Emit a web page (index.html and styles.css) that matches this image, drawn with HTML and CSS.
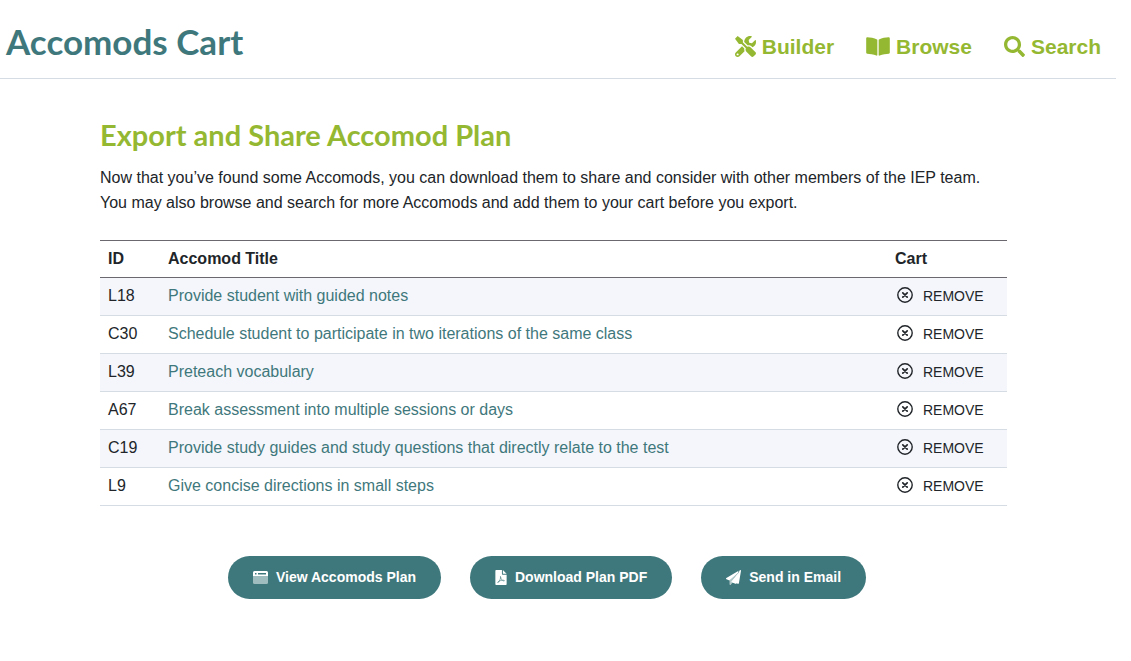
FILE: index.html
```
<!DOCTYPE html>
<html lang="en">
<head>
<meta charset="UTF-8">
<meta name="viewport" content="width=device-width, initial-scale=1.0">
<title>Accomods Cart</title>
<link rel="stylesheet" href="styles.css">
</head>
<body>

<!-- icons shared by the table rows -->
<svg class="sprite" aria-hidden="true">
  <symbol id="icon-remove" viewBox="0 0 16 16">
    <circle cx="8" cy="8" r="7.2" fill="none" stroke="currentColor" stroke-width="1.400"/>
    <path d="M5.800 5.800l4.400 4.400M10.200 5.800l-4.400 4.400" fill="none" stroke="currentColor" stroke-width="1.700" stroke-linecap="round"/>
  </symbol>
</svg>

<header class="site-header">
  <h1>Accomods Cart</h1>
  <nav class="main-nav">
    <a href="#builder">
      <svg class="nav-icon" viewBox="0 0 512 512"><path d="M501.1 395.7L384 278.6c-23.1-23.1-57.6-27.6-85.4-13.9L192 158.1V96L64 0 0 64l96 128h62.1l106.6 106.6c-13.6 27.8-9.2 62.3 13.9 85.4l117.1 117.1c14.6 14.6 38.2 14.6 52.7 0l52.7-52.7c14.5-14.6 14.5-38.2 0-52.7zM331.7 225c28.3 0 54.9 11 74.9 31l19.4 19.4c15.8-6.9 30.8-16.5 43.8-29.5 37.1-37.1 49.7-89.3 37.9-136.7-2.2-9-13.5-12.1-20.1-5.5l-74.4 74.4-67.9-11.3L334 98.9l74.4-74.4c6.6-6.6 3.4-17.9-5.7-20.2-47.4-11.7-99.6.9-136.6 37.9-28.5 28.5-41.9 66.1-41.2 103.6l82.1 82.1c8.1-1.9 16.5-2.9 24.7-2.9zm-103.9 82l-56.7-56.7L18.7 402.8c-25 25-25 65.5 0 90.5s65.5 25 90.5 0l123.6-123.6c-7.6-19.9-9.9-41.6-5-62.7zM64 472c-13.2 0-24-10.8-24-24 0-13.3 10.7-24 24-24s24 10.7 24 24c0 13.2-10.7 24-24 24z"/></svg>
      Builder
    </a>
    <a href="#browse">
      <svg class="nav-icon wide" viewBox="0 0 576 512"><path d="M542.22 32.05c-54.8 3.11-163.72 14.43-230.96 55.59-4.64 2.84-7.27 7.89-7.27 13.17v363.87c0 11.55 12.63 18.85 23.28 13.49 69.18-34.82 169.23-44.32 218.7-46.92 16.89-.89 30.02-14.43 30.02-30.66V62.75c.01-17.71-15.35-31.74-33.77-30.7zM264.73 87.64C197.5 46.48 88.58 35.17 33.78 32.05 15.36 31.01 0 45.04 0 62.75V400.6c0 16.24 13.13 29.78 30.02 30.66 49.49 2.6 149.59 12.11 218.77 46.95 10.62 5.35 23.21-1.94 23.21-13.46V100.63c0-5.29-2.62-10.14-7.27-12.99z"/></svg>
      Browse
    </a>
    <a href="#search">
      <svg class="nav-icon" viewBox="0 0 512 512"><path d="M505 442.7L405.3 343c-4.5-4.5-10.6-7-17-7H372c27.6-35.3 44-79.7 44-128C416 93.1 322.9 0 208 0S0 93.1 0 208s93.1 208 208 208c48.3 0 92.7-16.4 128-44v16.3c0 6.4 2.5 12.5 7 17l99.7 99.7c9.4 9.4 24.6 9.4 33.9 0l28.3-28.3c9.4-9.4 9.4-24.6.1-34zM208 336c-70.7 0-128-57.2-128-128 0-70.7 57.2-128 128-128 70.7 0 128 57.2 128 128 0 70.7-57.2 128-128 128z"/></svg>
      Search
    </a>
  </nav>
</header>

<main class="content">
  <h2>Export and Share Accomod Plan</h2>
  <p class="intro">Now that you’ve found some Accomods, you can download them to share and consider with other members of the IEP team. You may also browse and search for more Accomods and add them to your cart before you export.</p>

  <table class="cart-table">
    <thead>
      <tr>
        <th class="col-id" scope="col">ID</th>
        <th scope="col">Accomod Title</th>
        <th class="col-cart" scope="col">Cart</th>
      </tr>
    </thead>
    <tbody>
      <tr>
        <td>L18</td>
        <td><a href="#L18">Provide student with guided notes</a></td>
        <td><button class="remove"><svg><use href="#icon-remove"/></svg>REMOVE</button></td>
      </tr>
      <tr>
        <td>C30</td>
        <td><a href="#C30">Schedule student to participate in two iterations of the same class</a></td>
        <td><button class="remove"><svg><use href="#icon-remove"/></svg>REMOVE</button></td>
      </tr>
      <tr>
        <td>L39</td>
        <td><a href="#L39">Preteach vocabulary</a></td>
        <td><button class="remove"><svg><use href="#icon-remove"/></svg>REMOVE</button></td>
      </tr>
      <tr>
        <td>A67</td>
        <td><a href="#A67">Break assessment into multiple sessions or days</a></td>
        <td><button class="remove"><svg><use href="#icon-remove"/></svg>REMOVE</button></td>
      </tr>
      <tr>
        <td>C19</td>
        <td><a href="#C19">Provide study guides and study questions that directly relate to the test</a></td>
        <td><button class="remove"><svg><use href="#icon-remove"/></svg>REMOVE</button></td>
      </tr>
      <tr>
        <td>L9</td>
        <td><a href="#L9">Give concise directions in small steps</a></td>
        <td><button class="remove"><svg><use href="#icon-remove"/></svg>REMOVE</button></td>
      </tr>
    </tbody>
  </table>

  <div class="actions">
    <button class="btn">
      <svg width="15" height="14" viewBox="0 0 15 14">
        <path d="M0 5h15v6.500a1.500 1.500 0 0 1-1.500 1.500h-12A1.500 1.500 0 0 1 0 11.500z" opacity=".5"/>
        <path fill-rule="evenodd" d="M1.500 0h12A1.500 1.500 0 0 1 15 1.500V5H0V1.500A1.500 1.500 0 0 1 1.500 0zM2 2v1.400h1.500V2zM5 2v1.400h8V2z"/>
      </svg>
      View Accomods Plan
    </button>
    <button class="btn">
      <svg width="12" height="15" viewBox="0 0 384 512">
        <path d="M24 0h200v136c0 13.200 10.800 24 24 24h136v328c0 13.300-10.700 24-24 24H24c-13.300 0-24-10.700-24-24V24C0 10.700 10.700 0 24 0zM256 0l128 128H256z"/>
        <path d="M174 220c22 45-22 145-74 204-14 14-28 1-14-14 40-43 136-70 202-59 36 6 22 31-8 22-54-16-102-77-106-153z" fill="none" stroke="#3f787c" stroke-width="20"/>
      </svg>
      Download Plan PDF
    </button>
    <button class="btn">
      <svg width="15" height="15" viewBox="0 0 512 512">
        <path d="M476 3.200L12.500 270.600c-18.100 10.400-15.800 35.600 2.200 43.200L121 358.400 408.300 105.200c5.500-4.900 13.300 2.600 8.600 8.300L176 407l143.600 60.600c14.200 5.900 29.800-3 32-17.800l72-417.500z"/>
        <path d="M121 358.400V488c0 23.200 28 32.400 41.900 15.500L226 428l-50-21L440 80z" opacity=".6"/>
        <path d="M476 3.200c19-8 39 5 36 25l-72 422c-2 16-18 25-32 19L176 407 416.900 113.500z"/>
      </svg>
      Send in Email
    </button>
  </div>
</main>

</body>
</html>
```
FILE: styles.css
```
:root {
  --teal: #3f787c;
  --green: #95b832;
  --text: #212529;
  --line: #d6dce3;
}
* {
  box-sizing: border-box;
}
body {
  margin: 0;
  padding-right: 15px;
  background: #fff;
  color: var(--text);
  font: 16px/25px "Liberation Sans", Arial, sans-serif;
}
a {
  color: var(--teal);
  text-decoration: none;
}
a:hover {
  text-decoration: underline;
}
button {
  border: none;
  font-family: inherit;
  cursor: pointer;
}
svg {
  fill: currentColor;
  flex: none;
}
.sprite {
  display: none;
}
h1,
h2 {
  margin: 0;
  font-family: Lato, sans-serif;
  font-weight: 700;
}
.site-header {
  display: flex;
  justify-content: space-between;
  align-items: center;
  padding: 16px 15px 12px 6px;
  border-bottom: 1px solid var(--line);
}
h1 {
  color: var(--teal);
  font-size: 35px;
  line-height: 50px;
}
.main-nav {
  display: flex;
  gap: 32px;
  padding-top: 10px;
}
.main-nav a {
  display: flex;
  align-items: center;
  gap: 6px;
  color: var(--green);
  font-size: 21px;
  font-weight: 700;
}
.nav-icon {
  width: 21px;
  height: 21px;
}
.nav-icon.wide {
  width: 24px;
}
.content {
  padding: 36px 109px 40px 100px;
}
h2 {
  color: var(--green);
  font-size: 29px;
  line-height: 40px;
}
.intro {
  margin: 10px 0 25px;
}
.cart-table {
  width: 100%;
  border-collapse: collapse;
  border-top: 1px solid #6c6870;
}
.cart-table th,
.cart-table td {
  height: 38px;
  padding: 0 8px 2px;
  text-align: left;
}
.cart-table th {
  height: 37px;
}
.cart-table thead tr {
  border-bottom: 1px solid #6c6870;
}
.cart-table tbody tr {
  border-bottom: 1px solid var(--line);
}
.cart-table tbody tr:nth-child(odd) {
  background: #f4f6fb;
}
.col-id {
  width: 60px;
}
.col-cart {
  width: 120px;
}
.remove {
  display: flex;
  align-items: center;
  gap: 10px;
  padding: 1px 2px 0;
  background: none;
  color: var(--text);
  font-size: 14px;
  line-height: 25px;
}
.remove svg {
  width: 16px;
  height: 16px;
  margin-bottom: 2px;
}
.actions {
  display: flex;
  flex-wrap: wrap;
  justify-content: center;
  gap: 29px;
  padding-top: 50px;
  padding-right: 13px;
}
.btn {
  display: flex;
  align-items: center;
  gap: 8px;
  padding: 9px 25px;
  border-radius: 22px;
  background: var(--teal);
  color: #fff;
  font-size: 14px;
  font-weight: 700;
  line-height: 25px;
}
.btn:hover {
  background: #33666a;
}
```
